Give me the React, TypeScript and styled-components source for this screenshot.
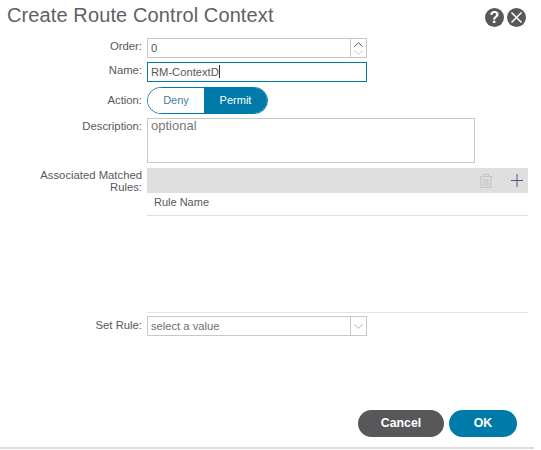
import styled, { createGlobalStyle } from 'styled-components';

const GlobalStyle = createGlobalStyle`
  html, body {
    margin: 0;
    padding: 0;
    background: #fff;
    font-family: 'Liberation Sans', Arial, sans-serif;
  }
`;

const Dialog = styled.div`
  width: 534px;
  height: 449px;
  box-sizing: border-box;
  border-bottom: 2px solid #dcdcdc;
  display: flex;
  flex-direction: column;
`;

const Header = styled.div`
  height: 38px;
  padding: 3px 8px 0 7px;
  box-sizing: border-box;
  display: flex;
  justify-content: space-between;
  align-items: flex-start;
`;

const Title = styled.div`
  font-size: 20px;
  line-height: 24px;
  color: #606064;
  letter-spacing: 0.11px;
`;

const HeaderIcons = styled.div`
  display: flex;
  gap: 3px;
  margin-top: 5px;
`;

const RoundIcon = styled.div`
  width: 19px;
  height: 19px;
  border-radius: 50%;
  background: #58585b;
  color: #fff;
  display: flex;
  align-items: center;
  justify-content: center;
  font-size: 16px;
  font-weight: 700;
`;

const Form = styled.div`
  flex: 1;
  display: flex;
  flex-direction: column;
`;

const Row = styled.div<{ $height: number; $gap?: number }>`
  display: grid;
  grid-template-columns: 142px 1fr;
  column-gap: 5px;
  height: ${p => p.$height}px;
  margin-bottom: ${p => p.$gap ?? 0}px;
`;

const Label = styled.div<{ $top?: number }>`
  padding-top: ${p => p.$top ?? 2}px;
  font-size: 11.3px;
  line-height: 12px;
  color: #58585b;
  text-align: right;
`;

const Field = styled.div<{ $width: number; $focus?: boolean }>`
  width: ${p => p.$width}px;
  height: 100%;
  box-sizing: border-box;
  border: 1px solid ${p => (p.$focus ? '#007aa8' : '#c8c8c8')};
  display: flex;
  align-items: stretch;
  font-size: 11.2px;
  color: #58585b;
`;

const FieldText = styled.div`
  flex: 1;
  padding: 2px 0 0 3px;
  line-height: 14px;
`;

const Placeholder = styled(FieldText)`
  color: #6e6e72;
`;

const Caret = styled.span`
  display: inline-block;
  width: 1px;
  height: 13px;
  background: #333;
  vertical-align: -2px;
`;

const SpinBox = styled.div`
  width: 15px;
  border-left: 1px solid #c8c8c8;
  display: flex;
  flex-direction: column;
  align-items: center;
  justify-content: center;
  gap: 3px;
`;

const ArrowBox = styled.div`
  width: 15px;
  border-left: 1px solid #c8c8c8;
  display: flex;
  align-items: center;
  justify-content: center;
`;

const Segmented = styled.div`
  width: 121px;
  height: 27px;
  display: flex;
  box-sizing: border-box;
  border-radius: 14px;
  border: 1px solid #007aa8;
  overflow: hidden;
  font-size: 11px;
`;

const Segment = styled.div<{ $active?: boolean }>`
  flex: ${p => (p.$active ? '0 0 63px' : '1')};
  display: flex;
  align-items: center;
  justify-content: center;
  padding-bottom: 1px;
  background: ${p => (p.$active ? '#007aa8' : '#fff')};
  color: ${p => (p.$active ? '#fff' : '#3f7f9f')};
`;

const Description = styled.div`
  width: 328px;
  height: 45px;
  box-sizing: border-box;
  border: 1px solid #c8c8c8;
  padding: 0 3px;
  font-size: 13px;
  line-height: 13px;
  color: #77777a;
`;

const Table = styled.div`
  width: 381px;
  height: 144px;
  display: flex;
  flex-direction: column;
  border-bottom: 1px solid #e4e4e4;
`;

const TableBar = styled.div`
  height: 25px;
  background: #dfdfdf;
  display: flex;
  justify-content: flex-end;
  align-items: center;
  gap: 18px;
  padding-right: 5px;
`;

const TableHead = styled.div`
  height: 22px;
  padding: 0 0 0 7px;
  border-bottom: 1px solid #dfdfdf;
  font-size: 11px;
  line-height: 19px;
  color: #58585b;
`;

const Footer = styled.div`
  display: flex;
  justify-content: flex-end;
  gap: 5px;
  padding: 0 17px 10px 0;
`;

const Pill = styled.div<{ $bg: string; $width: number }>`
  width: ${p => p.$width}px;
  height: 27px;
  border-radius: 14px;
  background: ${p => p.$bg};
  color: #fff;
  font-size: 12.3px;
  font-weight: 700;
  display: flex;
  align-items: center;
  justify-content: center;
  padding-bottom: 1px;
  box-sizing: border-box;
`;

function Chevron({ up, color }: { up?: boolean; color: string }) {
  return (
    <svg width="9" height="5" viewBox="0 0 9 5" fill="none" stroke={color} strokeWidth="1">
      <path d={up ? 'M0.3 4.6 L4.5 0.7 L8.7 4.6' : 'M0.3 0.4 L4.5 4.3 L8.7 0.4'} />
    </svg>
  );
}

export default function App() {
  return (
    <>
      <GlobalStyle />
      <Dialog>
        <Header>
          <Title>Create Route Control Context</Title>
          <HeaderIcons>
            <RoundIcon>?</RoundIcon>
            <RoundIcon>
              <svg width="13" height="13" viewBox="0 0 13 13" stroke="#fff" strokeWidth="1.5" fill="none">
                <path d="M1.5 1.5 L11.5 11.5 M11.5 1.5 L1.5 11.5" />
              </svg>
            </RoundIcon>
          </HeaderIcons>
        </Header>
        <Form>
          <Row $height={20} $gap={4}>
            <Label>Order:</Label>
            <Field $width={220}>
              <FieldText>0</FieldText>
              <SpinBox>
                <Chevron up color="#58585b" />
                <Chevron color="#c8c8c8" />
              </SpinBox>
            </Field>
          </Row>
          <Row $height={20} $gap={5}>
            <Label>Name:</Label>
            <Field $width={220} $focus>
              <FieldText>
                RM-ContextD
                <Caret />
              </FieldText>
            </Field>
          </Row>
          <Row $height={27} $gap={4}>
            <Label $top={7}>Action:</Label>
            <Segmented>
              <Segment>Deny</Segment>
              <Segment $active>Permit</Segment>
            </Segmented>
          </Row>
          <Row $height={45} $gap={5}>
            <Label>Description:</Label>
            <Description>optional</Description>
          </Row>
          <Row $height={144} $gap={4}>
            <Label $top={1}>
              Associated Matched
              <br />
              Rules:
            </Label>
            <Table>
              <TableBar>
                <svg width="14" height="14" viewBox="0 0 14 14" fill="none" stroke="#c6c6c6" strokeWidth="1.2">
                  <path d="M0.5 2.5 H13.5 M4.5 2.5 V0.5 H9.5 V2.5 M2 3 V13.5 H12 V3 M5 5 V12 M7 5 V12 M9 5 V12" />
                </svg>
                <svg width="12" height="13" viewBox="0 0 12 13" fill="none" stroke="#4f5a80" strokeWidth="1">
                  <path d="M6 0 V13 M0 6.5 H12" />
                </svg>
              </TableBar>
              <TableHead>Rule Name</TableHead>
            </Table>
          </Row>
          <Row $height={20}>
            <Label $top={3}>Set Rule:</Label>
            <Field $width={220}>
              <Placeholder>select a value</Placeholder>
              <ArrowBox>
                <Chevron color="#b4b4b4" />
              </ArrowBox>
            </Field>
          </Row>
        </Form>
        <Footer>
          <Pill $bg="#58585b" $width={86}>Cancel</Pill>
          <Pill $bg="#007aa8" $width={68}>OK</Pill>
        </Footer>
      </Dialog>
    </>
  );
}
